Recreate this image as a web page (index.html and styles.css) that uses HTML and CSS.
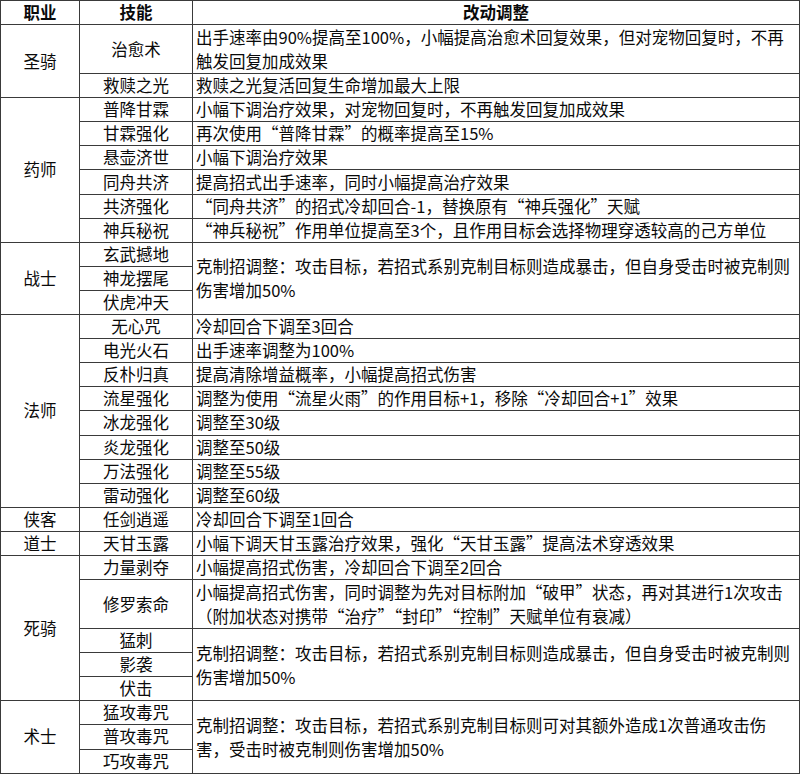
FILE: index.html
```html
<!DOCTYPE html>
<html lang="zh-CN">
<head>
<meta charset="utf-8">
<title>职业技能改动调整</title>
<link rel="stylesheet" href="styles.css">
</head>
<body>
<table class="changes">
  <colgroup>
    <col class="c-job">
    <col class="c-skill">
    <col class="c-desc">
  </colgroup>
  <thead>
    <tr class="u1">
      <th>职业</th>
      <th>技能</th>
      <th>改动调整</th>
    </tr>
  </thead>
  <tbody>
    <tr class="u2 grp">
      <td class="job" rowspan="2">圣骑</td>
      <td class="skill">治愈术</td>
      <td class="desc wrap">出手速率由90%提高至100%，小幅提高治愈术回复效果，但对宠物回复时，不再触发回复加成效果</td>
    </tr>
    <tr class="u1">
      <td class="skill">救赎之光</td>
      <td class="desc">救赎之光复活回复生命增加最大上限</td>
    </tr>

    <tr class="u1 grp">
      <td class="job" rowspan="6">药师</td>
      <td class="skill">普降甘霖</td>
      <td class="desc">小幅下调治疗效果，对宠物回复时，不再触发回复加成效果</td>
    </tr>
    <tr class="u1">
      <td class="skill">甘霖强化</td>
      <td class="desc">再次使用“普降甘霖”的概率提高至15%</td>
    </tr>
    <tr class="u1">
      <td class="skill">悬壶济世</td>
      <td class="desc">小幅下调治疗效果</td>
    </tr>
    <tr class="u1">
      <td class="skill">同舟共济</td>
      <td class="desc">提高招式出手速率，同时小幅提高治疗效果</td>
    </tr>
    <tr class="u1">
      <td class="skill">共济强化</td>
      <td class="desc">“同舟共济”的招式冷却回合-1，替换原有“神兵强化”天赋</td>
    </tr>
    <tr class="u1">
      <td class="skill">神兵秘祝</td>
      <td class="desc">“神兵秘祝”作用单位提高至3个，且作用目标会选择物理穿透较高的己方单位</td>
    </tr>

    <tr class="u1 grp">
      <td class="job" rowspan="3">战士</td>
      <td class="skill">玄武撼地</td>
      <td class="desc wrap" rowspan="3">克制招调整：攻击目标，若招式系别克制目标则造成暴击，但自身受击时被克制则伤害增加50%</td>
    </tr>
    <tr class="u1">
      <td class="skill">神龙摆尾</td>
    </tr>
    <tr class="u1">
      <td class="skill">伏虎冲天</td>
    </tr>

    <tr class="u1 grp">
      <td class="job" rowspan="8">法师</td>
      <td class="skill">无心咒</td>
      <td class="desc">冷却回合下调至3回合</td>
    </tr>
    <tr class="u1">
      <td class="skill">电光火石</td>
      <td class="desc">出手速率调整为100%</td>
    </tr>
    <tr class="u1">
      <td class="skill">反朴归真</td>
      <td class="desc">提高清除增益概率，小幅提高招式伤害</td>
    </tr>
    <tr class="u1">
      <td class="skill">流星强化</td>
      <td class="desc">调整为使用“流星火雨”的作用目标+1，移除“冷却回合+1”效果</td>
    </tr>
    <tr class="u1">
      <td class="skill">冰龙强化</td>
      <td class="desc">调整至30级</td>
    </tr>
    <tr class="u1">
      <td class="skill">炎龙强化</td>
      <td class="desc">调整至50级</td>
    </tr>
    <tr class="u1">
      <td class="skill">万法强化</td>
      <td class="desc">调整至55级</td>
    </tr>
    <tr class="u1">
      <td class="skill">雷动强化</td>
      <td class="desc">调整至60级</td>
    </tr>

    <tr class="u1 grp">
      <td class="job">侠客</td>
      <td class="skill">任剑逍遥</td>
      <td class="desc">冷却回合下调至1回合</td>
    </tr>

    <tr class="u1 grp">
      <td class="job">道士</td>
      <td class="skill">天甘玉露</td>
      <td class="desc">小幅下调天甘玉露治疗效果，强化“天甘玉露”提高法术穿透效果</td>
    </tr>

    <tr class="u1 grp">
      <td class="job" rowspan="5">死骑</td>
      <td class="skill">力量剥夺</td>
      <td class="desc">小幅提高招式伤害，冷却回合下调至2回合</td>
    </tr>
    <tr class="u2">
      <td class="skill">修罗索命</td>
      <td class="desc wrap">小幅提高招式伤害，同时调整为先对目标附加“破甲”状态，再对其进行1次攻击（附加状态对携带“治疗”“封印”“控制”天赋单位有衰减）</td>
    </tr>
    <tr class="u1">
      <td class="skill">猛刺</td>
      <td class="desc wrap" rowspan="3">克制招调整：攻击目标，若招式系别克制目标则造成暴击，但自身受击时被克制则伤害增加50%</td>
    </tr>
    <tr class="u1">
      <td class="skill">影袭</td>
    </tr>
    <tr class="u1">
      <td class="skill">伏击</td>
    </tr>

    <tr class="u1 grp">
      <td class="job" rowspan="3">术士</td>
      <td class="skill">猛攻毒咒</td>
      <td class="desc wrap" rowspan="3">克制招调整：攻击目标，若招式系别克制目标则可对其额外造成1次普通攻击伤害，受击时被克制则伤害增加50%</td>
    </tr>
    <tr class="u1">
      <td class="skill">普攻毒咒</td>
    </tr>
    <tr class="u1">
      <td class="skill">巧攻毒咒</td>
    </tr>
  </tbody>
</table>
</body>
</html>
```

FILE: styles.css
```css
html, body {
  margin: 0;
  padding: 0;
  background: #ffffff;
}

body {
  font-family: "Noto Sans CJK SC", "Microsoft YaHei", "Noto Sans", sans-serif;
  font-size: 16.5px;
  line-height: 23px;
  color: #0a0a0a;
}

.changes {
  border-collapse: collapse;
  table-layout: fixed;
  width: 799px;
  margin: 0;
}

.c-job { width: 79px; }
.c-skill { width: 113px; }
.c-desc { width: 607px; }

.changes th,
.changes td {
  border: 1px solid #3a3a3a;
  padding: 0 3px;
  vertical-align: middle;
  overflow: hidden;
}

.changes th {
  font-weight: 700;
  text-align: center;
}

.u1 { height: 24.1px; }
.u2 { height: 48.2px; }

.grp > td,
.grp > th {
  border-top-color: #222222;
}

.job,
.skill {
  text-align: center;
  padding: 0;
}

.desc {
  text-align: left;
  padding-left: 3px;
  padding-right: 14px;
}

.desc.wrap {
  line-height: 24px;
}
```
